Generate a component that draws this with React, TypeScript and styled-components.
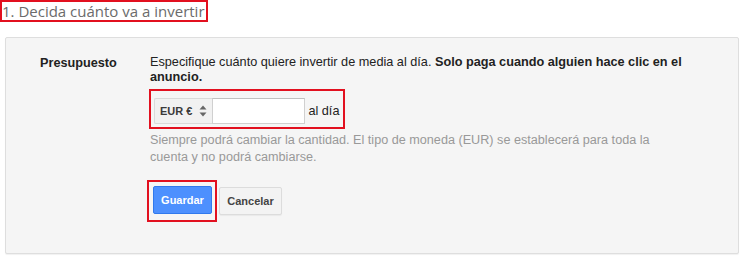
import React from "react";
import styled, { createGlobalStyle } from "styled-components";

const GlobalStyle = createGlobalStyle`
  body {
    margin: 0;
    background: #ffffff;
    font-family: "Liberation Sans", Arial, sans-serif;
  }
`;

const Page = styled.div`
  width: 750px;
  height: 263px;
  overflow: hidden;
`;

const Highlight = styled.div<{ $pad: string }>`
  display: inline-flex;
  align-items: center;
  border: 2px solid #e2101f;
  padding: ${(p) => p.$pad};
`;

const Heading = styled.h2`
  margin: 0;
  width: fit-content;
  font-family: "Open Sans", sans-serif;
  font-weight: 400;
  font-size: 15px;
  line-height: 18px;
  color: #6b6b6b;
  border: 2px solid #e2101f;
  padding: 0 1px 0 0;
`;

const Panel = styled.section`
  margin: 15px 0 0 5px;
  width: 734px;
  height: 217px;
  box-sizing: border-box;
  background: #f5f5f5;
  border: 1px solid #dedede;
  border-radius: 2px;
  box-shadow: 0 1px 1px rgba(0, 0, 0, 0.06);
  display: grid;
  grid-template-columns: 110px 1fr;
  align-items: start;
  padding: 17px 0 0 34px;
`;

const Label = styled.div`
  font-size: 12.7px;
  font-weight: 700;
  color: #222;
  line-height: 15px;
  padding-top: 1px;
`;

const Body = styled.div`
  display: flex;
  flex-direction: column;
  align-items: flex-start;
`;

const Intro = styled.p`
  margin: 0;
  font-size: 12.7px;
  line-height: 15px;
  color: #222;
  width: 545px;

  strong {
    font-weight: 700;
  }
`;

const InputRow = styled.div`
  display: flex;
  align-items: center;
  margin: 4px 0 0 -1px;
`;

const Select = styled.div`
  display: flex;
  align-items: center;
  gap: 7px;
  height: 26px;
  box-sizing: border-box;
  padding: 0 5px;
  background: #f1f1f1;
  border: 1px solid #dadada;
  border-right: none;
  border-radius: 2px 0 0 2px;
  font-size: 11px;
  font-weight: 700;
  color: #3a3a3a;
`;

const Amount = styled.input`
  width: 93px;
  height: 26px;
  box-sizing: border-box;
  border: 1px solid #d0d0d0;
  border-top-color: #c0c0c0;
  background: #fff;
  margin: 0;
  outline: none;
`;

const Unit = styled.span`
  font-size: 12.7px;
  color: #222;
  margin-left: 3px;
`;

const Hint = styled.p`
  margin: 3px 0 0;
  font-size: 12.65px;
  line-height: 17px;
  color: #999;
  width: 520px;
`;

const Actions = styled.div`
  display: flex;
  align-items: center;
  gap: 2px;
  margin: 14px 0 0 -3px;
`;

const Button = styled.button<{ $primary?: boolean }>`
  height: 28px;
  box-sizing: border-box;
  padding: 0;
  font-family: "Liberation Sans", Arial, sans-serif;
  font-size: 11px;
  font-weight: 700;
  border-radius: 2px;
  cursor: pointer;
  border: 1px solid ${(p) => (p.$primary ? "#3079ed" : "#dcdcdc")};
  background: ${(p) => (p.$primary ? "#4d90fe" : "#f3f3f3")};
  color: ${(p) => (p.$primary ? "#fff" : "#444")};
  width: ${(p) => (p.$primary ? 59 : 63)}px;
  box-shadow: ${(p) => (p.$primary ? "none" : "0 1px 1px rgba(0,0,0,0.05)")};
`;

const Arrows = () => (
  <svg width="8" height="12" viewBox="0 0 8 12">
    <path d="M4 0.5 L7.5 4.5 H0.5 Z" fill="#666" />
    <path d="M4 11.5 L7.5 7.5 H0.5 Z" fill="#666" />
  </svg>
);

export default function App() {
  return (
    <Page>
      <GlobalStyle />
      <Heading>1. Decida cuánto va a invertir</Heading>
      <Panel>
        <Label>Presupuesto</Label>
        <Body>
          <Intro>
            Especifique cuánto quiere invertir de media al día.{" "}
            <strong>Solo paga cuando alguien hace clic en el anuncio.</strong>
          </Intro>
          <InputRow>
            <Highlight $pad="7px 4px 3px 3px">
              <Select>
                EUR € <Arrows />
              </Select>
              <Amount type="text" />
              <Unit>al día</Unit>
            </Highlight>
          </InputRow>
          <Hint>
            Siempre podrá cambiar la cantidad. El tipo de moneda (EUR) se
            establecerá para toda la cuenta y no podrá cambiarse.
          </Hint>
          <Actions>
            <Highlight $pad="4px 3px 6px 4px">
              <Button $primary>Guardar</Button>
            </Highlight>
            <Button>Cancelar</Button>
          </Actions>
        </Body>
      </Panel>
    </Page>
  );
}
